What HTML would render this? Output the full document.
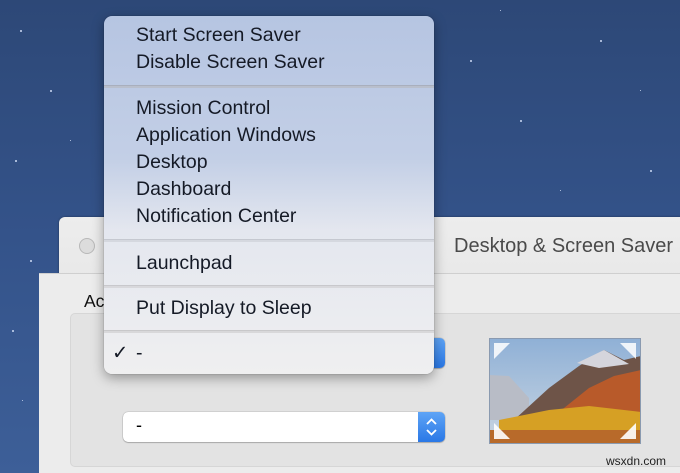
<!DOCTYPE html>
<html><head><meta charset="utf-8"><style>
*{margin:0;padding:0;box-sizing:border-box}
html,body{width:680px;height:473px;overflow:hidden}
body{position:relative;font-family:"Liberation Sans",sans-serif;background:linear-gradient(180deg,#2d4877 0%,#34538a 50%,#3d5f98 100%)}
.star{position:absolute;background:#cfdcf5;border-radius:50%}
.win{position:absolute;left:59px;top:217px;width:640px;height:256px;border-radius:6px 0 0 0;background:linear-gradient(#ededed,#d9d9d9);box-shadow:0 0 2px rgba(0,0,0,.4)}
.win .dot{position:absolute;left:20px;top:21px;width:16px;height:16px;border-radius:50%;border:1px solid #b8b8b8;background:#dcdcdc}
.title{position:absolute;left:454px;top:235px;font-size:20px;color:#4a4a4a;white-space:nowrap}
.content{position:absolute;left:39px;top:273px;width:660px;height:200px;background:#ececec;border-top:1px solid #cfcfcf}
.box{position:absolute;left:70px;top:313px;width:640px;height:154px;background:#e3e3e3;border:1px solid #d6d6d6;border-radius:5px}
.ac{position:absolute;left:84px;top:291px;font-size:17.5px;color:#111}
.pop{position:absolute;left:123px;top:412px;width:322px;height:30px;background:#fff;border-radius:5px;box-shadow:0 0 1px rgba(0,0,0,.5),0 1px 1px rgba(0,0,0,.2)}
.step{position:absolute;right:0;top:0;width:27px;height:100%;background:linear-gradient(#5ea4f6,#2a78e6);border-radius:0 5px 5px 0}
.menu{position:absolute;left:104px;top:16px;width:330px;height:358px;border-radius:8px;background:linear-gradient(180deg,#b6c5e2 0%,#c3cfe6 40%,#e4e7ef 60%,#efeff0 100%);box-shadow:0 4px 12px rgba(0,0,0,.35),0 0 1px rgba(0,0,0,.4);overflow:hidden}
.it{position:absolute;left:32px;font-size:19.5px;color:#151a26;line-height:22px;white-space:nowrap}
.sep{position:absolute;left:0;width:330px;height:3px;background:#b9bfcc;border-top:1px solid #a9afbd}
</style></head><body>
<div class="star" style="left:20px;top:30px;width:2px;height:2px"></div>
<div class="star" style="left:50px;top:90px;width:2px;height:2px"></div>
<div class="star" style="left:15px;top:160px;width:2px;height:2px"></div>
<div class="star" style="left:70px;top:140px;width:1px;height:1px"></div>
<div class="star" style="left:30px;top:260px;width:2px;height:2px"></div>
<div class="star" style="left:12px;top:330px;width:2px;height:2px"></div>
<div class="star" style="left:22px;top:400px;width:1px;height:1px"></div>
<div class="star" style="left:470px;top:60px;width:2px;height:2px"></div>
<div class="star" style="left:520px;top:120px;width:2px;height:2px"></div>
<div class="star" style="left:600px;top:40px;width:2px;height:2px"></div>
<div class="star" style="left:650px;top:170px;width:2px;height:2px"></div>
<div class="star" style="left:560px;top:190px;width:1px;height:1px"></div>
<div class="star" style="left:500px;top:10px;width:1px;height:1px"></div>
<div class="star" style="left:640px;top:90px;width:1px;height:1px"></div>
<div class="win"><div class="dot"></div></div>
<div class="title">Desktop &amp; Screen Saver</div>
<div class="content"></div>
<div class="box"></div>
<div class="ac">Ac</div>
<div class="pop" style="left:330px;top:338px;width:115px"><div class="step"></div></div>
<div class="pop"><span style="position:absolute;left:13px;top:3px;font-size:18px">-</span><div class="step"><svg width="27" height="30" viewBox="0 0 27 30"><path d="M9 12 L13.5 7.5 L18 12 M9 18 L13.5 22.5 L18 18" fill="none" stroke="#fff" stroke-width="1.8"/></svg></div></div>
<svg style="position:absolute;left:489px;top:338px" width="152" height="106" viewBox="0 0 152 106">
<defs><linearGradient id="sky" x1="0" y1="0" x2="0" y2="1"><stop offset="0" stop-color="#8fb0d6"/><stop offset="1" stop-color="#c9d6e2"/></linearGradient></defs>
<rect width="152" height="106" fill="url(#sky)"/>
<polygon points="0,37 20,38 40,60 40,82 0,82" fill="#b8bcc6"/>
<polygon points="25,82 60,50 90,28 115,12 135,22 152,18 152,82" fill="#6e5448"/>
<polygon points="60,82 100,50 125,38 152,32 152,82" fill="#b85a2a"/>
<polygon points="88,25 115,12 140,26 110,30" fill="#d5d5dc"/>
<polygon points="10,82 60,72 100,68 152,74 152,92 10,92" fill="#d6a024"/>
<rect y="92" width="152" height="14" fill="#b86a2a"/>
<rect width="152" height="106" fill="none" stroke="#8a9ab0" stroke-width="2"/>
<polygon points="5,5 21,5 5,21" fill="#fff" opacity=".85"/>
<polygon points="147,5 131,5 147,21" fill="#fff" opacity=".85"/>
<polygon points="5,101 21,101 5,85" fill="#fff" opacity=".9"/>
<polygon points="147,101 131,101 147,85" fill="#fff" opacity=".9"/>
</svg>
<div class="menu">
<div class="it" style="top:8px">Start Screen Saver</div>
<div class="it" style="top:35px">Disable Screen Saver</div>
<div class="sep" style="top:69px"></div>
<div class="it" style="top:81px">Mission Control</div>
<div class="it" style="top:108px">Application Windows</div>
<div class="it" style="top:135px">Desktop</div>
<div class="it" style="top:162px">Dashboard</div>
<div class="it" style="top:189px">Notification Center</div>
<div class="sep" style="top:223px;background:#d5d8df;border-color:#c5c8d0"></div>
<div class="it" style="top:236px">Launchpad</div>
<div class="sep" style="top:269px;background:#d8d8dc;border-color:#c8c8cc"></div>
<div class="it" style="top:281px">Put Display to Sleep</div>
<div class="sep" style="top:314px;background:#d8d8da;border-color:#c8c8ca"></div>
<div class="it" style="top:326px;left:8px">✓</div>
<div class="it" style="top:326px">-</div>
</div>
<div style="position:absolute;left:606px;top:454px;font-size:12px;color:#222">wsxdn.com</div>
</body></html>
